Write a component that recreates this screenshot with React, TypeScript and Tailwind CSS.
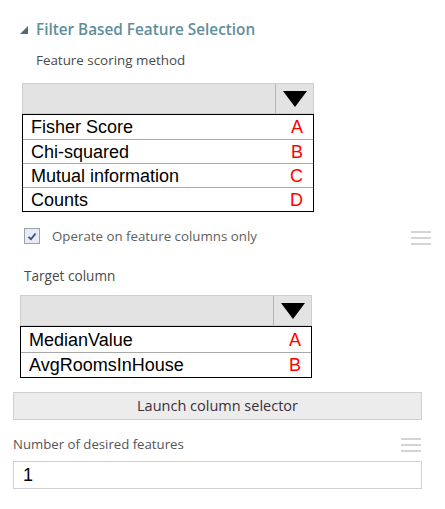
import React from "react";

const uiFont = { fontFamily: '"Open Sans", "Noto Sans", sans-serif' };
const listFont = { fontFamily: '"Liberation Sans", Arial, sans-serif' };

function DropArrow() {
  return (
    <svg width="24" height="16" viewBox="0 0 24 16">
      <polygon points="0,0 24,0 12,16" fill="#000" />
    </svg>
  );
}

function Hamburger() {
  return (
    <div className="flex w-[20px] flex-col gap-[4px]">
      <div className="h-[2px] bg-[#d4d4d4]" />
      <div className="h-[2px] bg-[#d4d4d4]" />
      <div className="h-[2px] bg-[#d4d4d4]" />
    </div>
  );
}

interface OptionListProps {
  items: [string, string][];
  rowHeight: string;
}

function OptionList({ items, rowHeight }: OptionListProps) {
  return (
    <div className="w-[292px] border border-black bg-white" style={listFont}>
      {items.map(([label, letter], i) => (
        <div
          key={label}
          className={`flex items-center justify-between pl-[8px] pr-[10px] text-[18px] leading-none text-black ${rowHeight} ${
            i > 0 ? "border-t border-[#a8a8a8]" : ""
          }`}
        >
          <span>{label}</span>
          <span className="text-[#ff0000]">{letter}</span>
        </div>
      ))}
    </div>
  );
}

function Dropdown() {
  return (
    <div className="flex h-[31px] w-[292px] border border-[#cfcfcf] bg-[#e3e3e3]">
      <div className="flex-1" />
      <div className="flex w-[38px] items-center justify-center border-l border-[#b4b4b4]">
        <DropArrow />
      </div>
    </div>
  );
}

export default function App() {
  return (
    <div className="h-[509px] w-[445px] overflow-hidden bg-white" style={uiFont}>
      <div className="flex items-center pl-[20px] pt-[18px]">
        <svg width="8" height="8" viewBox="0 0 8 8" className="mt-[2px]">
          <polygon points="8,0 8,8 0,8" fill="#4d6b78" />
        </svg>
        <span className="ml-[8px] text-[15.3px] font-semibold leading-[22px] text-[#5f8e9b]">
          Filter Based Feature Selection
        </span>
      </div>

      <div className="ml-[36px] mt-[11px] text-[13.4px] leading-[18px] text-[#4a4a4a]">
        Feature scoring method
      </div>

      <div className="ml-[22px] mt-[14px]">
        <Dropdown />
        <OptionList
          rowHeight="h-[24px]"
          items={[
            ["Fisher Score", "A"],
            ["Chi-squared", "B"],
            ["Mutual information", "C"],
            ["Counts", "D"],
          ]}
        />
      </div>

      <div className="mt-[15px] flex items-center pl-[24px] pr-[14px]">
        <div className="flex h-[16px] w-[16px] items-center justify-center border border-[#9aa3b0] bg-[#e8ecf2]">
          <svg width="10" height="9" viewBox="0 0 10 9">
            <path d="M1.5 4.8 L4 7.2 L8.5 1.5" stroke="#2f4f86" strokeWidth="1.8" fill="none" />
          </svg>
        </div>
        <span className="ml-[12px] text-[13.3px] leading-[18px] text-[#5e5e5e]">
          Operate on feature columns only
        </span>
        <div className="ml-auto mt-[4px]">
          <Hamburger />
        </div>
      </div>

      <div className="ml-[24px] mt-[22px] text-[13.6px] leading-[18px] text-[#4a4a4a]">
        Target column
      </div>

      <div className="ml-[20px] mt-[10px]">
        <Dropdown />
        <OptionList
          rowHeight="h-[25px]"
          items={[
            ["MedianValue", "A"],
            ["AvgRoomsInHouse", "B"],
          ]}
        />
      </div>

      <div className="px-[13px] pr-[23px]">
        <button className="mt-[14px] flex h-[28px] w-full items-center justify-center border border-[#d0d0d0] bg-[#ececec] text-[14.5px] text-[#3a2f3a]">
          Launch column selector
        </button>

        <div className="mt-[15px] flex items-center">
          <span className="text-[13.2px] leading-[18px] text-[#555]">
            Number of desired features
          </span>
          <div className="ml-auto mr-[1px] mt-[1px]">
            <Hamburger />
          </div>
        </div>

        <div
          className="mt-[8px] flex h-[28px] w-full items-center border border-[#d0d0d0] bg-white pl-[9px] text-[18px] text-black"
          style={listFont}
        >
          1
        </div>
      </div>
    </div>
  );
}
